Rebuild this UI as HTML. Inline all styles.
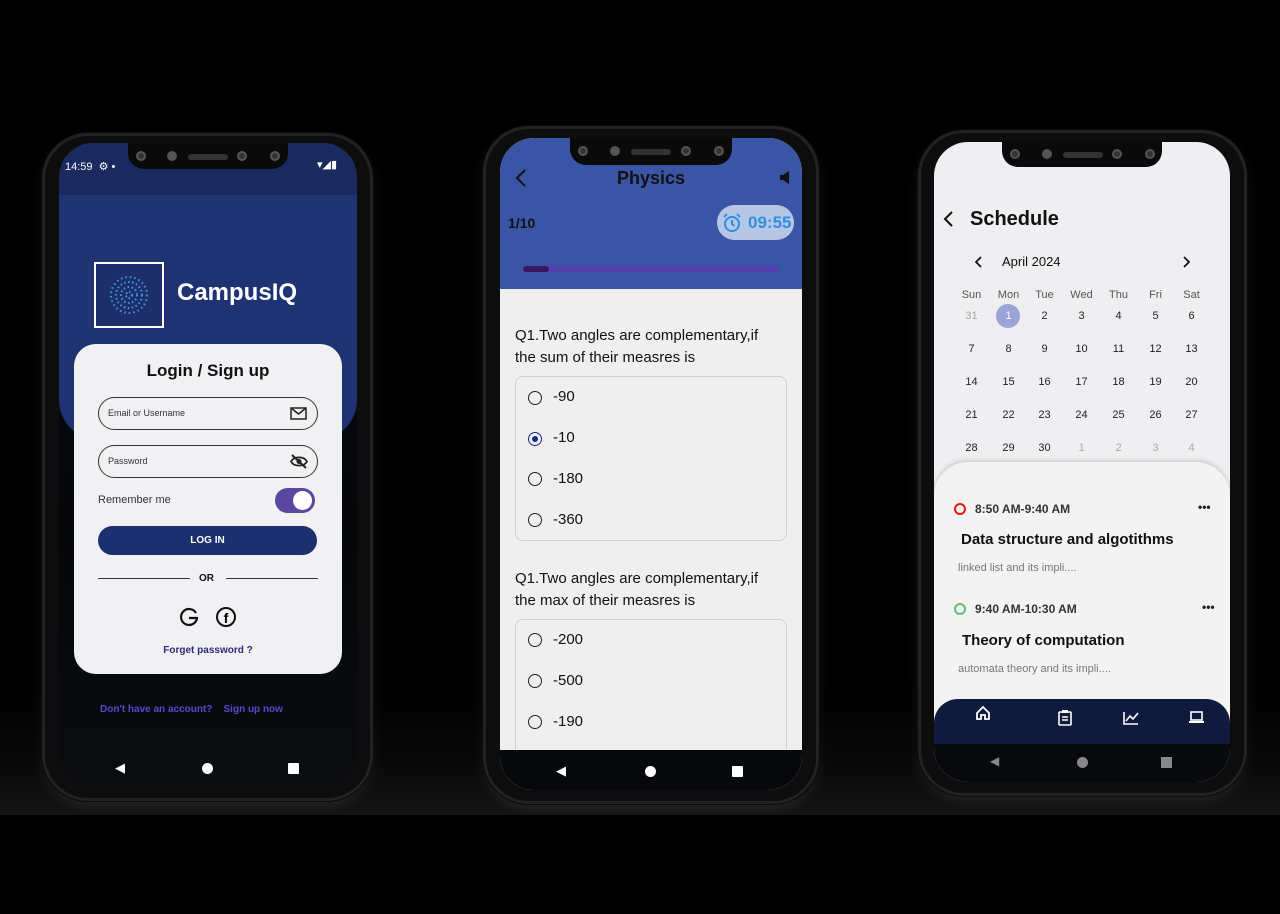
<!DOCTYPE html>
<html><head><meta charset="utf-8"><style>
*{margin:0;padding:0;box-sizing:border-box}
body{width:1280px;height:914px;background:#000;position:relative;overflow:hidden;font-family:"Liberation Sans",sans-serif}
.a{position:absolute}
.glow{position:absolute;left:0;top:680px;width:1280px;height:135px;background:linear-gradient(#000,#080808 60%,#141414)}
.frame{position:absolute;border-radius:46px;background:#0d0d0d;border:3px solid #222;box-shadow:0 0 0 1px #0a0a0a,0 6px 12px rgba(255,255,255,.07)}
.scr{position:absolute;overflow:hidden;border-radius:34px}
.notch{position:absolute;background:#0a0a0a;border-radius:0 0 16px 16px}
.cam{position:absolute;width:10px;height:10px;border-radius:50%;background:#333;border:2px solid #555}
.t{position:absolute;white-space:nowrap}
.nav{position:absolute;color:#fff}
.radio{position:absolute;width:14px;height:14px;border:1.6px solid #222;border-radius:50%}
.opt{position:absolute;font-size:15px;color:#111}
.cal{position:absolute;font-size:11px;color:#222;width:37px;text-align:center}
svg{position:absolute}
</style></head><body>
<div class="glow"></div>

<!-- Phone 1 -->
<div class="frame" style="left:42px;top:133px;width:331px;height:668px"></div>
<div class="scr" style="left:59px;top:143px;width:298px;height:643px;background:linear-gradient(#0c0f1a,#050608 60%,#0a0c10)">
  <div class="a" style="left:0;top:0;width:298px;height:52px;background:#1b2a5e"></div>
  <div class="a" style="left:0;top:52px;width:298px;height:245px;background:#1f3272;border-radius:0 0 40px 40px"></div>
  <div class="t" style="left:6px;top:17px;color:#fff;font-size:11px">14:59 &nbsp;⚙ •</div>
  <div class="t" style="left:258px;top:15px;color:#fff;font-size:11px">▾◢▮</div>
  <div class="a" style="left:35px;top:119px;width:70px;height:66px;border:2px solid #fff;background:#1d2e6a">
    <svg width="66" height="62" viewBox="0 0 66 62"><g fill="none" stroke="#3aa0e0" stroke-width="2"><circle cx="33" cy="31" r="18" stroke-dasharray="1.5 3"/><circle cx="33" cy="31" r="13" stroke-dasharray="1.5 2.5"/><circle cx="33" cy="31" r="8" stroke-dasharray="1.5 2.5"/><circle cx="33" cy="31" r="3" stroke-dasharray="1.5 2"/></g></svg>
  </div>
  <div class="t" style="left:118px;top:136px;color:#fff;font-size:24px;font-weight:bold">CampusIQ</div>
  <div class="a" style="left:15px;top:201px;width:268px;height:330px;background:#f1f1f3;border-radius:22px"></div>
  <div class="t" style="left:15px;top:218px;width:268px;text-align:center;font-size:17px;font-weight:bold;color:#111">Login / Sign up</div>
  <div class="a" style="left:39px;top:254px;width:220px;height:33px;border:1.5px solid #333;border-radius:17px"></div>
  <div class="t" style="left:49px;top:265px;font-size:9px;color:#333">Email or Username</div>
  <svg style="left:231px;top:264px" width="17" height="13" viewBox="0 0 17 13"><rect x="1" y="1" width="15" height="11" fill="none" stroke="#222" stroke-width="1.5"/><path d="M1 1l7.5 6L16 1" fill="none" stroke="#222" stroke-width="1.5"/></svg>
  <div class="a" style="left:39px;top:302px;width:220px;height:33px;border:1.5px solid #333;border-radius:17px"></div>
  <div class="t" style="left:49px;top:313px;font-size:9px;color:#333">Password</div>
  <svg style="left:231px;top:311px" width="18" height="15" viewBox="0 0 18 15"><path d="M1 7.5C4 2 14 2 17 7.5 14 13 4 13 1 7.5z" fill="none" stroke="#222" stroke-width="1.8"/><circle cx="9" cy="7.5" r="2.5" fill="#222"/><path d="M2 1l14 13" stroke="#222" stroke-width="2"/></svg>
  <div class="t" style="left:39px;top:351px;font-size:11px;color:#333">Remember me</div>
  <div class="a" style="left:216px;top:345px;width:40px;height:25px;border-radius:13px;background:#5b46a0"></div>
  <div class="a" style="left:234px;top:348px;width:19px;height:19px;border-radius:50%;background:#fff"></div>
  <div class="a" style="left:39px;top:383px;width:219px;height:29px;border-radius:15px;background:#1c2f6e"></div>
  <div class="t" style="left:39px;top:392px;width:219px;text-align:center;font-size:10px;font-weight:bold;color:#fff">LOG IN</div>
  <div class="a" style="left:39px;top:435px;width:92px;height:1px;background:#333"></div>
  <div class="a" style="left:167px;top:435px;width:92px;height:1px;background:#333"></div>
  <div class="t" style="left:140px;top:430px;font-size:10px;font-weight:bold;color:#111">OR</div>
  <svg style="left:120px;top:464px" width="20" height="20" viewBox="0 0 20 20"><path d="M17 6A8 8 0 1 0 18 11H10" fill="none" stroke="#111" stroke-width="2.2"/></svg>
  <div class="a" style="left:157px;top:464px;width:20px;height:20px;border:2px solid #111;border-radius:50%;font-size:14px;font-weight:bold;text-align:center;line-height:18px">f</div>
  <div class="t" style="left:15px;top:502px;width:268px;text-align:center;font-size:10px;font-weight:bold;color:#2c2a7a">Forget password ?</div>
  <div class="t" style="left:41px;top:561px;font-size:10px;font-weight:bold;color:#5a48d0">Don't have an account? &nbsp;&nbsp; Sign up now</div>
  <div class="nav" style="left:56px;top:617px;font-size:13px">◀</div>
  <div class="a" style="left:143px;top:620px;width:11px;height:11px;border-radius:50%;background:#fff"></div>
  <div class="a" style="left:229px;top:620px;width:11px;height:11px;background:#fff;border-radius:1px"></div>
</div>
<div class="notch" style="left:128px;top:143px;width:160px;height:26px"></div>
<div class="cam" style="left:136px;top:151px"></div><div class="cam" style="left:167px;top:151px;background:#555"></div>
<div class="a" style="left:188px;top:154px;width:40px;height:6px;border-radius:3px;background:#333"></div>
<div class="cam" style="left:237px;top:151px"></div><div class="cam" style="left:270px;top:151px"></div>

<!-- Phone 2 -->
<div class="frame" style="left:483px;top:126px;width:336px;height:678px"></div>
<div class="scr" style="left:500px;top:138px;width:302px;height:652px;background:#efefef">
  <div class="a" style="left:0;top:0;width:302px;height:151px;background:#3b55a6"></div>
  <svg style="left:15px;top:31px" width="12" height="18" viewBox="0 0 12 18"><path d="M10 1L2 9l8 8" fill="none" stroke="#111" stroke-width="2"/></svg>
  <div class="t" style="left:0;top:30px;width:302px;text-align:center;font-size:18px;font-weight:bold;color:#111">Physics</div>
  <svg style="left:280px;top:33px" width="10" height="13" viewBox="0 0 10 13"><path d="M0 4h3l6-4v13l-6-4H0z" fill="#111"/></svg>
  <div class="t" style="left:8px;top:77px;font-size:14px;font-weight:bold;color:#111">1/10</div>
  <div class="a" style="left:217px;top:67px;width:77px;height:35px;border-radius:18px;background:#b8c6e6"></div>
  <svg style="left:222px;top:75px" width="20" height="20" viewBox="0 0 20 20"><circle cx="10" cy="11" r="7" fill="none" stroke="#2f8fe0" stroke-width="2"/><path d="M10 7v4l2.5 2M2 4l3-3M18 4l-3-3" fill="none" stroke="#2f8fe0" stroke-width="2"/></svg>
  <div class="t" style="left:248px;top:75px;font-size:17px;font-weight:bold;color:#2f8fe0">09:55</div>
  <div class="a" style="left:23px;top:128px;width:256px;height:6px;border-radius:3px;background:#5640b0"></div>
  <div class="a" style="left:23px;top:128px;width:26px;height:6px;border-radius:3px;background:#3a1660"></div>
  <div class="t" style="left:15px;top:187px;font-size:15px;color:#111;line-height:22px">Q1.Two angles are complementary,if<br>the sum of their measres is</div>
  <div class="a" style="left:15px;top:238px;width:272px;height:165px;border:1px solid #cfcfcf;border-radius:8px"></div>
  <div class="radio" style="left:28px;top:253px"></div><div class="opt" style="left:53px;top:250px">-90</div>
  <div class="radio" style="left:28px;top:294px;border-color:#1a2a8a"></div><div class="a" style="left:32px;top:298px;width:6px;height:6px;border-radius:50%;background:#1a2a8a"></div><div class="opt" style="left:53px;top:291px">-10</div>
  <div class="radio" style="left:28px;top:334px"></div><div class="opt" style="left:53px;top:332px">-180</div>
  <div class="radio" style="left:28px;top:375px"></div><div class="opt" style="left:53px;top:373px">-360</div>
  <div class="t" style="left:15px;top:430px;font-size:15px;color:#111;line-height:22px">Q1.Two angles are complementary,if<br>the max of their measres is</div>
  <div class="a" style="left:15px;top:481px;width:272px;height:180px;border:1px solid #cfcfcf;border-radius:8px"></div>
  <div class="radio" style="left:28px;top:495px"></div><div class="opt" style="left:53px;top:493px">-200</div>
  <div class="radio" style="left:28px;top:536px"></div><div class="opt" style="left:53px;top:534px">-500</div>
  <div class="radio" style="left:28px;top:577px"></div><div class="opt" style="left:53px;top:575px">-190</div>
  <div class="a" style="left:0;top:612px;width:302px;height:40px;background:#07080c"></div>
  <div class="nav" style="left:56px;top:625px;font-size:13px">◀</div>
  <div class="a" style="left:145px;top:628px;width:11px;height:11px;border-radius:50%;background:#fff"></div>
  <div class="a" style="left:232px;top:628px;width:11px;height:11px;background:#fff;border-radius:1px"></div>
</div>
<div class="notch" style="left:570px;top:138px;width:162px;height:27px"></div>
<div class="cam" style="left:578px;top:146px"></div><div class="cam" style="left:610px;top:146px;background:#555"></div>
<div class="a" style="left:631px;top:149px;width:40px;height:6px;border-radius:3px;background:#333"></div>
<div class="cam" style="left:681px;top:146px"></div><div class="cam" style="left:714px;top:146px"></div>

<!-- Phone 3 -->
<div class="frame" style="left:918px;top:130px;width:329px;height:666px"></div>
<div class="scr" style="left:934px;top:142px;width:296px;height:640px;background:#efeff1">
  <svg style="left:9px;top:69px" width="11" height="16" viewBox="0 0 11 16"><path d="M9 1L2 8l7 7" fill="none" stroke="#111" stroke-width="2"/></svg>
  <div class="t" style="left:36px;top:66px;font-size:20px;font-weight:bold;color:#111">Schedule</div>
  <svg style="left:41px;top:114px" width="8" height="12" viewBox="0 0 8 12"><path d="M6 1L1 6l5 5" fill="none" stroke="#111" stroke-width="1.8"/></svg>
  <div class="t" style="left:68px;top:112px;font-size:13px;color:#111">April 2024</div>
  <svg style="left:248px;top:114px" width="8" height="12" viewBox="0 0 8 12"><path d="M2 1l5 5-5 5" fill="none" stroke="#111" stroke-width="1.8"/></svg>
  <div class="a" style="left:62px;top:162px;width:24px;height:24px;border-radius:50%;background:#9aa4d6"></div>
  <div class="a" style="left:0;top:320px;width:296px;height:260px;background:#f3f3f3;border-radius:34px 34px 0 0;box-shadow:0 -2px 4px rgba(0,0,0,.15)"></div>
  <div class="a" style="left:20px;top:361px;width:12px;height:12px;border:2.5px solid #e01818;border-radius:50%"></div>
  <div class="t" style="left:41px;top:360px;font-size:12px;font-weight:bold;color:#333">8:50 AM-9:40 AM</div>
  <div class="t" style="left:264px;top:358px;font-size:12px;font-weight:bold;color:#222">•••</div>
  <div class="t" style="left:27px;top:389px;font-size:15px;font-weight:bold;color:#111">Data structure and algotithms</div>
  <div class="t" style="left:24px;top:420px;font-size:11px;color:#777">linked list and its impli....</div>
  <div class="a" style="left:20px;top:461px;width:12px;height:12px;border:2.5px solid #5cba7a;border-radius:50%"></div>
  <div class="t" style="left:41px;top:460px;font-size:12px;font-weight:bold;color:#333">9:40 AM-10:30 AM</div>
  <div class="t" style="left:268px;top:458px;font-size:12px;font-weight:bold;color:#222">•••</div>
  <div class="t" style="left:28px;top:490px;font-size:15px;font-weight:bold;color:#111">Theory of computation</div>
  <div class="t" style="left:24px;top:521px;font-size:11px;color:#777">automata theory and its impli....</div>
  <div class="a" style="left:0;top:557px;width:296px;height:50px;background:#0f1a3c;border-radius:24px 24px 0 0"></div>
  <svg style="left:41px;top:563px" width="16" height="16" viewBox="0 0 16 16"><path d="M2 8L8 2l6 6v6H10v-4H6v4H2z" fill="none" stroke="#fff" stroke-width="1.8"/></svg>
  <svg style="left:124px;top:567px" width="14" height="17" viewBox="0 0 14 17"><rect x="1" y="3" width="12" height="13" rx="1" fill="none" stroke="#fff" stroke-width="1.6"/><rect x="4" y="1" width="6" height="3" fill="#fff"/><path d="M4 8h6M4 11h6" stroke="#fff" stroke-width="1.4"/></svg>
  <svg style="left:189px;top:569px" width="16" height="14" viewBox="0 0 16 14"><path d="M1 1v12h14M3 10l4-5 3 3 5-6" fill="none" stroke="#fff" stroke-width="1.6"/></svg>
  <svg style="left:254px;top:569px" width="17" height="13" viewBox="0 0 17 13"><rect x="3" y="1" width="11" height="8" fill="none" stroke="#fff" stroke-width="1.6"/><path d="M1 11h15" stroke="#fff" stroke-width="2"/></svg>
  <div class="a" style="left:0;top:602px;width:296px;height:38px;background:#08090d"></div>
  <div class="nav" style="left:56px;top:612px;font-size:12px;color:#888">◀</div>
  <div class="a" style="left:143px;top:615px;width:11px;height:11px;border-radius:50%;background:#888"></div>
  <div class="a" style="left:227px;top:615px;width:11px;height:11px;background:#888"></div>
</div>
<div class="notch" style="left:1002px;top:142px;width:160px;height:25px"></div>
<div class="cam" style="left:1010px;top:149px"></div><div class="cam" style="left:1042px;top:149px;background:#555"></div>
<div class="a" style="left:1063px;top:152px;width:40px;height:6px;border-radius:3px;background:#333"></div>
<div class="cam" style="left:1112px;top:149px"></div><div class="cam" style="left:1145px;top:149px"></div>

<div class="a" style="left:934px;top:142px">
<div class="cal" style="left:19px;top:147px;color:#555">Sun</div><div class="cal" style="left:56px;top:147px;color:#555">Mon</div><div class="cal" style="left:92px;top:147px;color:#555">Tue</div><div class="cal" style="left:129px;top:147px;color:#555">Wed</div><div class="cal" style="left:166px;top:147px;color:#555">Thu</div><div class="cal" style="left:203px;top:147px;color:#555">Fri</div><div class="cal" style="left:239px;top:147px;color:#555">Sat</div>
<div class="cal" style="left:19px;top:168px;color:#aaa">31</div><div class="cal" style="left:56px;top:168px;color:#fff">1</div><div class="cal" style="left:92px;top:168px">2</div><div class="cal" style="left:129px;top:168px">3</div><div class="cal" style="left:166px;top:168px">4</div><div class="cal" style="left:203px;top:168px">5</div><div class="cal" style="left:239px;top:168px">6</div>
<div class="cal" style="left:19px;top:201px">7</div><div class="cal" style="left:56px;top:201px">8</div><div class="cal" style="left:92px;top:201px">9</div><div class="cal" style="left:129px;top:201px">10</div><div class="cal" style="left:166px;top:201px">11</div><div class="cal" style="left:203px;top:201px">12</div><div class="cal" style="left:239px;top:201px">13</div>
<div class="cal" style="left:19px;top:234px">14</div><div class="cal" style="left:56px;top:234px">15</div><div class="cal" style="left:92px;top:234px">16</div><div class="cal" style="left:129px;top:234px">17</div><div class="cal" style="left:166px;top:234px">18</div><div class="cal" style="left:203px;top:234px">19</div><div class="cal" style="left:239px;top:234px">20</div>
<div class="cal" style="left:19px;top:267px">21</div><div class="cal" style="left:56px;top:267px">22</div><div class="cal" style="left:92px;top:267px">23</div><div class="cal" style="left:129px;top:267px">24</div><div class="cal" style="left:166px;top:267px">25</div><div class="cal" style="left:203px;top:267px">26</div><div class="cal" style="left:239px;top:267px">27</div>
<div class="cal" style="left:19px;top:300px">28</div><div class="cal" style="left:56px;top:300px">29</div><div class="cal" style="left:92px;top:300px">30</div><div class="cal" style="left:129px;top:300px;color:#aaa">1</div><div class="cal" style="left:166px;top:300px;color:#aaa">2</div><div class="cal" style="left:203px;top:300px;color:#aaa">3</div><div class="cal" style="left:239px;top:300px;color:#aaa">4</div>
</div>
</body></html>
